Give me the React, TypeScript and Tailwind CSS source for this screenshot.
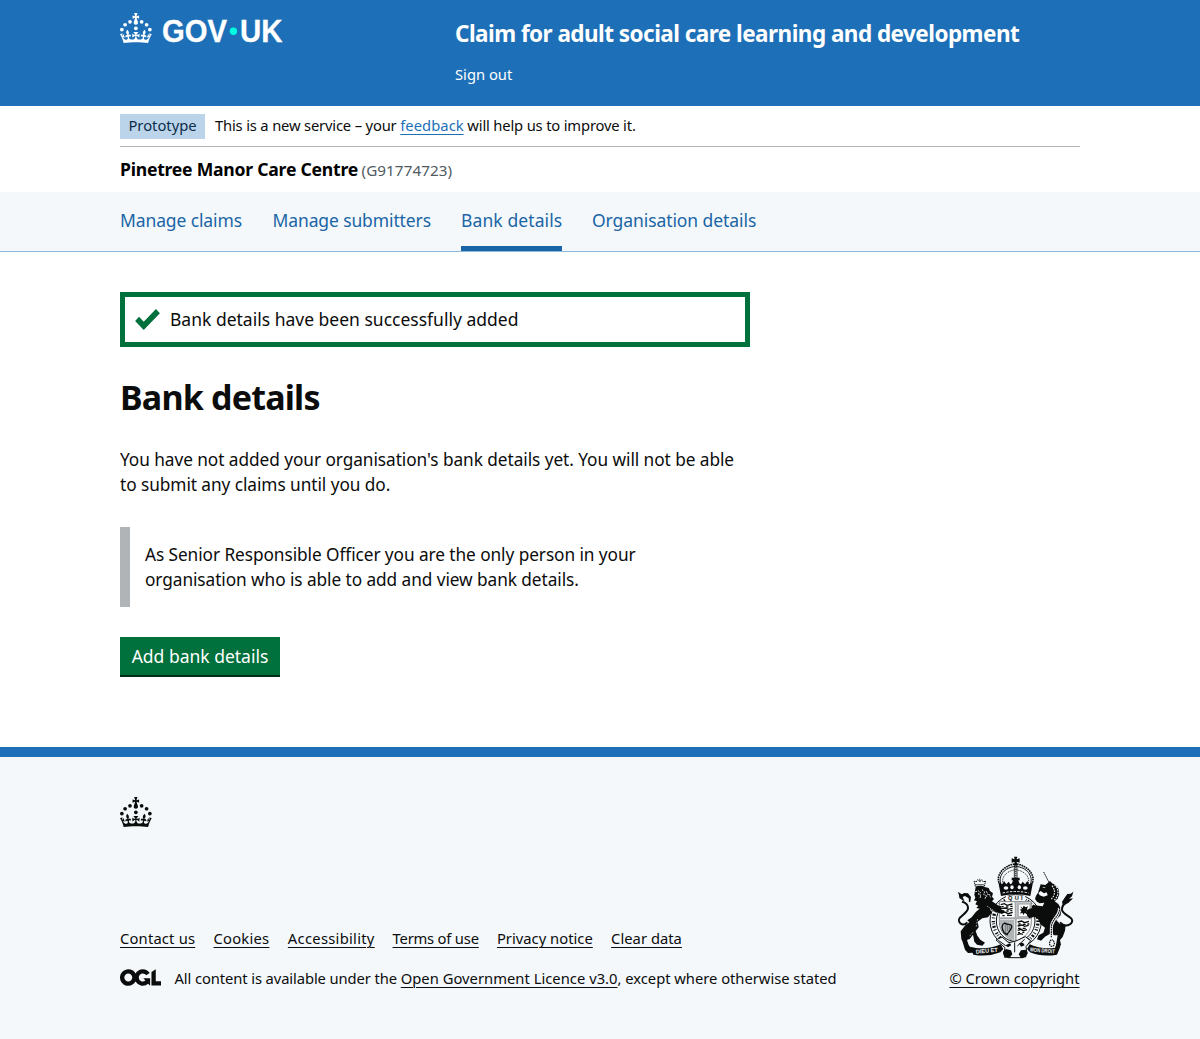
import type { ReactNode } from "react";

const crownPath =
  "M33.1,9.8c.2-.1.3-.3.5-.5l4.6,2.4v-6.8l-4.6,1.5c-.1-.2-.3-.3-.5-.5l1.9-5.9h-6.7l1.9,5.9c-.2.1-.3.3-.5.5l-4.6-1.5v6.8l4.6-2.4c.1.2.3.3.5.5l-2.6,8c-.9,2.8,1.2,5.7,4.1,5.7h0c3,0,5.1-2.9,4.1-5.7l-2.6-8ZM37,37.9s-3.4,3.8-4.1,6.1c2.2,0,4.2-.5,6.4-2.8l-.7,8.5c-2-2.8-4.4-4.1-5.7-3.8.1,3.1.5,6.7,5.8,7.2,3.7.3,6.7-1.5,7-3.8.4-2.6-2-4.3-3.7-1.6-1.4-4.5,2.4-6.1,4.9-3.2-1.9-4.5-1.8-7.7,2.4-10.9,3,4,2.6,7.3-1.2,11.1,2.4-1.3,6.2,0,4,4.6-1.2-2.8-3.7-2.2-4.2.2-.3,1.7.7,3.7,3,4.2,1.9.3,4.7-.9,7-5.9-1.3,0-2.4.7-3.9,1.7l2.4-8c.6,2.3,1.4,3.7,2.2,4.5.6-1.6.5-2.8,0-5.3l5,1.8c-2.6,3.6-5.2,8.7-7.3,17.5-7.4-1.1-15.7-1.7-24.5-1.7h0c-8.8,0-17.1.6-24.5,1.7-2.1-8.9-4.7-13.9-7.3-17.5l5-1.8c-.5,2.5-.6,3.7,0,5.3.8-.8,1.6-2.3,2.2-4.5l2.4,8c-1.5-1-2.6-1.7-3.9-1.7,2.3,5,5.2,6.2,7,5.9,2.3-.4,3.3-2.4,3-4.2-.5-2.4-3-3.1-4.2-.2-2.2-4.6,1.6-6,4-4.6-3.7-3.7-4.2-7.1-1.2-11.1,4.2,3.2,4.3,6.4,2.4,10.9,2.5-2.8,6.3-1.3,4.9,3.2-1.8-2.7-4.1-1-3.7,1.6.3,2.3,3.3,4.1,7,3.8,5.4-.5,5.7-4.2,5.8-7.2-1.3-.2-3.7,1-5.7,3.8l-.7-8.5c2.2,2.3,4.2,2.7,6.4,2.8-.7-2.3-4.1-6.1-4.1-6.1h10.6Z";

const crownPearls = [
  [20, 17.6],
  [10.2, 23.5],
  [3.7, 33.2],
  [31.7, 30.6],
  [43.3, 17.6],
  [53.2, 23.5],
  [59.7, 33.2],
];

function CrownShape() {
  return (
    <g>
      {crownPearls.map(([x, y]) => (
        <circle key={`${x}-${y}`} cx={x} cy={y} r="3.7" />
      ))}
      <path d={crownPath} />
    </g>
  );
}

function GovUkLogo() {
  return (
    <svg viewBox="0 0 324 60" className="block h-[30px] w-[162px] overflow-visible" fill="currentColor" role="img" aria-label="GOV.UK">
      <CrownShape />
      <g className="font-['Liberation_Sans'] font-bold" fontSize="61" stroke="currentColor" strokeWidth="0.6">
        <text x="84" y="57.6" textLength="130" lengthAdjust="spacingAndGlyphs">GOV</text>
        <text x="240" y="57.6" textLength="85" lengthAdjust="spacingAndGlyphs">UK</text>
      </g>
      <circle cx="226.8" cy="36.4" r="7.4" fill="#00ffe0" />
    </svg>
  );
}

function OglLogo() {
  return (
    <svg viewBox="0 0 483.2 195.7" className="mt-px h-[17px] w-[41px] shrink-0" fill="currentColor" aria-hidden="true">
      <path d="M421.5 142.8V.1l-50.7 32.3v161.1h112.4v-50.7zm-122.3-9.6A47.12 47.12 0 0 1 221 97.8c0-26 21.1-47.1 47.1-47.1 16.7 0 31.4 8.7 39.7 21.8l42.7-27.2A97.63 97.63 0 0 0 268.1 0c-36.5 0-68.3 20.1-85.1 49.7A98 98 0 0 0 97.8 0C43.9 0 0 43.9 0 97.8s43.9 97.8 97.8 97.8c36.5 0 68.3-20.1 85.1-49.7a97.76 97.76 0 0 0 149.6 25.4l19.4 22.2h3v-87.8h-80l24.3 27.5zM97.8 145c-26 0-47.1-21.1-47.1-47.1s21.1-47.1 47.1-47.1 47.1 21.1 47.1 47.1S123.8 145 97.8 145" />
    </svg>
  );
}

function RoyalArms() {
  return (
    <svg viewBox="30 15 360 315" className="block h-[105px] w-[120px]" fill="#0b0c0c" aria-hidden="true">
      {/* crown */}
      <path d="M207 20h10l-2 8 9-3v13l-9-3 3 12h-12l3-12-9 3V25l9 3z" />
      <g fill="none" stroke="#0b0c0c">
        <path d="M168 104C158 78 178 52 212 49c34 3 54 29 44 55" strokeWidth="3" />
        <path d="M175 103c-8-20 8-40 37-44 29 4 45 24 37 44" strokeWidth="3" strokeDasharray="3 3" />
        <path d="M162 98c-9-24 14-50 46-56M262 98c9-24-14-50-46-56" strokeWidth="5" strokeDasharray="5 2" />
        <path d="M208 50v46M216 50v46" strokeWidth="2.5" />
        <path d="M212 52v40" strokeWidth="4" strokeDasharray="3 3" />
      </g>
      <path d="M168 138l-8-41 12 6 5-10 7 10 7-8 5 8 5-3 3-9h-4v-8h24v8h-4l3 9 5 3 5-8 7 8 7-10 5 10 12-6-8 41q-44-11-88 0z" />
      <g fill="#f4f8fb">
        <ellipse cx="183" cy="114" rx="7" ry="5" />
        <ellipse cx="241" cy="114" rx="7" ry="5" />
        <ellipse cx="201" cy="112" rx="5" ry="6" />
        <ellipse cx="223" cy="112" rx="5" ry="6" />
      </g>
      <path d="M173 129q39-9 78 0" fill="none" stroke="#f4f8fb" strokeWidth="3" strokeDasharray="7 4" />

      {/* garter */}
      <ellipse cx="212" cy="213" rx="77" ry="79" fill="#f4f8fb" stroke="#0b0c0c" strokeWidth="3" />
      <ellipse cx="212" cy="213" rx="67" ry="70" fill="none" stroke="#0b0c0c" strokeWidth="10" strokeDasharray="3 5 6 5 2 4 4 8" />
      <ellipse cx="212" cy="213" rx="58" ry="61" fill="#f4f8fb" stroke="#0b0c0c" strokeWidth="3" />
      <path d="M183 137h57v17h-57z" fill="#f4f8fb" />
      <text x="189" y="151" fontSize="17" textLength="44" fill="#0b0c0c" className="font-['Liberation_Sans'] font-bold">QUI</text>

      {/* shield */}
      <path d="M163 155h96v60c0 30-20 48-48 60-28-12-48-30-48-60z" fill="#fff" stroke="#85898b" strokeWidth="3" />
      <path d="M216 157h42v46h-42z" fill="#b1b4b6" />
      <path d="M222 164h31v34h-31z" fill="#fff" />
      <path d="M164 209h43v62c-26-12-43-30-43-62z" fill="#b1b4b6" />
      <path d="M209 155h6v118h-6zM163 202h96v6h-96z" fill="#a5a8aa" />
      <path d="M225 169l8 5 3-7 6 5 7-3-3 9 5 5-7 1 3 9-8-4-4 6-3-7-7 3 4-8-5-4 7-2z" />
      <g fill="none" stroke="#0b0c0c" strokeWidth="4">
        <path d="M167 164l11-3 8 5 16-4M168 176l14-2 7 4 14-3M167 190l12-4 10 5 14-4" />
        <path d="M170 170h6m7 1h7m6-2h7M171 183h7m6 0h7m5-1h6M172 197h7m7-1h15" />
        <path d="M218 216l12-3 8 5 14-4M218 228l13-3 8 4 12-3M218 241l10-3 7 4 11-3M217 254l9-3 8 2" />
        <path d="M220 222h7m7 1h8m5-1h6M219 235h8m6 0h9M219 248h6m7-1h6" />
      </g>
      <path d="M177 248c-8-14-8-24 2-29 8 8 18 0 21 9 2 10-9 16-14 26z" fill="none" stroke="#0b0c0c" strokeWidth="4" />
      <path d="M182 224v24m6-23v18m6-17v12" stroke="#56595c" strokeWidth="2" />

      {/* lion */}
      <path d="M91 109l-4-16 7 3 4-7 6 6 7-6 4 7 7-3-4 16z" fill="#f4f8fb" stroke="#0b0c0c" strokeWidth="3" strokeDasharray="4 2" />
      <path d="M104 86v9m-14 9h27" stroke="#0b0c0c" strokeWidth="2" />
      <path d="M92 111q14-7 27 0l12 3 4 9 9 7-3 10 6 7-6 7 20 13 9 2-2 9 10 6-6 7-23-6-14-9 5 12-11 14-17 3-14 10 3 17-9 11 5 14 9 12 14 9-8 9-16-3-8-9-4-21-10 13-8 3 5 15 9 12 7 4-3 7-15 1-9-10-7-23-4-9-2-23 14-18 12-9-6-6 13-9 13-17 11-9-10-2 6-7-9-4 5-9-9-3 4-8-3-9z" />
      <path d="M91 125l10-2 6 5-8 4 9 4-3 8M111 119l8 7-3 7 8 4-4 9M124 124l5 9-4 7M132 132l5 10" fill="none" stroke="#f4f8fb" strokeWidth="3" strokeDasharray="5 3" />
      <path d="M84 247l-12 14M98 207l-5 26M126 168l24 17" fill="none" stroke="#f4f8fb" strokeWidth="2" strokeDasharray="5 4" />
      <path d="M67 217c-16 16-31-3-23-13 9-10 24-18 25-29 1-12-9-17-18-20" fill="none" stroke="#0b0c0c" strokeWidth="6" />
      <path d="M39 125l11 8 8-4 11 1 9 11-2 14-4 2-1-12-11-7-7 3 6 14-16-11-1-8z" />

      {/* unicorn */}
      <path d="M296 66l17 33" stroke="#0b0c0c" strokeWidth="3" strokeDasharray="5 2" />
      <path d="M287 103l14 2 8-7 6-5 6 7 11 5 9 12 2 15-5 15-9 7 11 8 9 16-2 18-14 13 11 12 18 4-2 17-7 19-8 9 3 14-10 17-9-3 5-18 4-24-12 0-6-14-6 10-14 8-12 12-12-4 5-12 14-8 5-15-14-11-7-15-10-7-16 5-6-7-4-12 8-9 14-4-5-5 9-2 24 3 5-11-14 2-8-5-6-8 3-10 6-9z" />
      <path d="M328 104c15 12 14 34 0 46M321 107c10 13 11 26-2 40M334 105c18 17 13 36-2 49" fill="none" stroke="#f4f8fb" strokeWidth="3.5" strokeDasharray="5 3" />
      <path d="M284 136l-4-7 7-6 10 7 8-3 3 9-12 4z" fill="#f4f8fb" />
      <path d="M293 112l8 1" stroke="#f4f8fb" strokeWidth="2" />
      <path d="M343 173c4 25-25 34-24 61v28m0 7c-8 6-7 20 2 20s10-14 0-20" fill="none" stroke="#f4f8fb" strokeWidth="9" />
      <path d="M343 173c4 25-25 34-24 61v28m0 7c-8 6-7 20 2 20s10-14 0-20" fill="none" stroke="#0b0c0c" strokeWidth="3.5" strokeDasharray="5 2" />
      <path d="M345 217c20 20 43 2 35-10-7-10-27-14-29-28-1-13 10-20 20-24" fill="none" stroke="#0b0c0c" strokeWidth="6" />
      <path d="M385 125l-4 14-9 7 12-1-10 10-13 4-7 10-3-14 9-13 7-10 10-1z" />

      {/* buckle and compartment */}
      <path d="M153 270l18-9 20 17 22-5 28-13 16 12-14 18 3 22-12 11h-44l-14-10 4-20z" fill="#f4f8fb" stroke="#0b0c0c" strokeWidth="3" />
      <path d="M174 305l9-8 15 4 4 12-8 10h-16zM221 313l7-12 13-2 7 8-5 15-15 2zM181 286l14-6 4 6-10 6zM222 280l12-2 5 8-11 4z" />
      <path d="M160 271l22 16m57-19l-22 20M209 277v30" stroke="#0b0c0c" strokeWidth="3" />

      {/* motto scroll */}
      <path d="M75 290l18 4q42 4 74-11l8 14-9 10q-37 15-81 7z" />
      <path d="M346 290l-18 4q-42 4-74-11l-8 14 9 10q37 15 81 7z" />
      <g fill="#f4f8fb" fontSize="17" className="font-['Liberation_Sans'] font-bold">
        <text x="93" y="311" textLength="66" lengthAdjust="spacingAndGlyphs" transform="rotate(-5 93 311)">DIEU ET</text>
        <text x="255" y="304" textLength="74" lengthAdjust="spacingAndGlyphs" transform="rotate(5 255 304)">MON DROIT</text>
      </g>
    </svg>
  );
}

function Container({ children, className = "" }: { children: ReactNode; className?: string }) {
  return <div className={`mx-auto w-[960px] ${className}`}>{children}</div>;
}

const navItems = [
  { label: "Manage claims", width: "w-[122.5px] tracking-[-0.12px]", current: false },
  { label: "Manage submitters", width: "w-[158.5px] tracking-[-0.12px]", current: false },
  { label: "Bank details", width: "w-[101px] tracking-[0.1px]", current: true },
  { label: "Organisation details", width: "w-[165px] tracking-[-0.08px]", current: false },
];

const footerLinks = [
  { label: "Contact us", width: "w-[75.3px] tracking-[0.18px]" },
  { label: "Cookies", width: "w-[56.2px] tracking-[0.24px]" },
  { label: "Accessibility", width: "w-[86.5px] tracking-[0.28px]" },
  { label: "Terms of use", width: "w-[86.2px] tracking-[-0.2px]" },
  { label: "Privacy notice", width: "w-[96px] tracking-[0.02px]" },
  { label: "Clear data", width: "w-[71px] tracking-[0.02px]" },
];

export default function App() {
  return (
    <div className="min-h-[1039px] bg-white font-['Noto_Sans',sans-serif] text-[#0b0c0c]">
      <header className="h-[106px] bg-[#1d70b8] text-white">
        <Container className="flex">
          <a className="w-[335px] pt-[13px]">
            <GovUkLogo />
          </a>
          <div className="pt-[18px]">
            <div className="text-[22.5px] leading-8 font-bold tracking-[-0.54px] whitespace-nowrap">
              Claim for adult social care learning and development
            </div>
            <a className="mt-[14px] block text-[14.75px] leading-5">Sign out</a>
          </div>
        </Container>
      </header>

      <Container>
        <div className="flex h-[41px] items-start border-b border-[#b1b4b6] pt-2">
          <strong className="h-[25px] w-[85px] bg-[#bbd4ea] text-center text-[14.75px] leading-[23px] font-normal whitespace-nowrap text-[#0c2d4a]">
            Prototype
          </strong>
          <span className="ml-[10px] text-[14.75px] leading-[23px] tracking-[-0.17px] whitespace-nowrap">
            This is a new service – your{" "}
            <a className="tracking-[0.05px] text-[#1d70b8] underline decoration-1 underline-offset-[3px]">feedback</a> will help us to
            improve it.
          </span>
        </div>
        <div className="flex h-[45px] items-baseline pt-[10px] leading-[25px] whitespace-nowrap">
          <strong className="w-[241.5px] text-[17.6px] tracking-[-0.24px] text-black">Pinetree Manor Care Centre</strong>
          <span className="text-[15.25px] tracking-[0.06px] text-[#505a5f]">(G91774723)</span>
        </div>
      </Container>

      <nav className="h-[60px] border-b border-[#8eb8dc] bg-[#f4f8fb]">
        <Container className="flex h-full gap-[30px] text-[17.5px] leading-[25px] text-[#1a65a6]">
          {navItems.map((item) => (
            <a
              key={item.label}
              className={`${item.width} pt-4 whitespace-nowrap ${item.current ? "h-[59px] border-b-[5px] border-[#1a65a6]" : ""}`}
            >
              {item.label}
            </a>
          ))}
        </Container>
      </nav>

      <Container className="h-[495px] pt-10">
        <main className="w-[630px]">
          <div className="flex h-[55px] items-center border-[5px] border-[#00703c] pl-[10px] text-[17.5px]">
            <svg viewBox="0 0 25 21.2" className="mr-[10px] h-[21px] w-[25px]" fill="#00703c" aria-hidden="true">
              <path d="M25 4.2L8.7 21.2 0 12.1l4-4.2 4.7 4.9L21 0z" />
            </svg>
            Bank details have been successfully added
          </div>
          <h1 className="mt-[30px] text-[34px] leading-10 font-bold tracking-[-0.8px]">Bank details</h1>
          <p className="mt-[30px] text-[17.25px] leading-[25px] tracking-[-0.06px]">
            You have not added your organisation's bank details yet. You will not be able
            <br />
            to submit any claims until you do.
          </p>
          <div className="mt-[30px] h-20 border-l-[10px] border-[#b1b4b6] py-[15px] pl-[15px] text-[17.25px] leading-[25px] tracking-[-0.07px]">
            As Senior Responsible Officer you are the only person in your
            <br />
            organisation who is able to add and view bank details.
          </div>
          <button className="mt-[30px] block h-10 w-40 border-b-2 border-[#002d18] bg-[#00703c] text-[17.5px] leading-[38px] whitespace-nowrap text-white">
            Add bank details
          </button>
        </main>
      </Container>

      <footer className="h-[292px] border-t-[10px] border-[#1d70b8] bg-[#f4f8fb] pt-10 text-[14.75px] leading-5">
        <Container>
          <svg viewBox="0 0 64 60" className="block h-[30px] w-8" fill="currentColor" aria-hidden="true">
            <CrownShape />
          </svg>
          <div className="mt-[28px] flex items-end justify-between">
            <div className="pb-px">
              <div className="flex gap-[18.2px]">
                {footerLinks.map((link) => (
                  <a key={link.label} className={`${link.width} whitespace-nowrap`}>
                    <span className="underline decoration-1 underline-offset-[3px]">{link.label}</span>
                  </a>
                ))}
              </div>
              <div className="mt-5 flex items-start">
                <OglLogo />
                <span className="ml-[13.5px] tracking-[-0.1px] whitespace-nowrap">
                  All content is available under the{" "}
                  <a className="tracking-[0.02px] underline decoration-1 underline-offset-[3px]">Open Government Licence v3.0</a>
                  <span className="tracking-[-0.02px]">, except where otherwise stated</span>
                </span>
              </div>
            </div>
            <a className="flex w-[131px] flex-col items-center whitespace-nowrap underline decoration-1 underline-offset-[3px]">
              <RoyalArms />
              <span className="mt-2 mb-px">© Crown copyright</span>
            </a>
          </div>
        </Container>
      </footer>
    </div>
  );
}
